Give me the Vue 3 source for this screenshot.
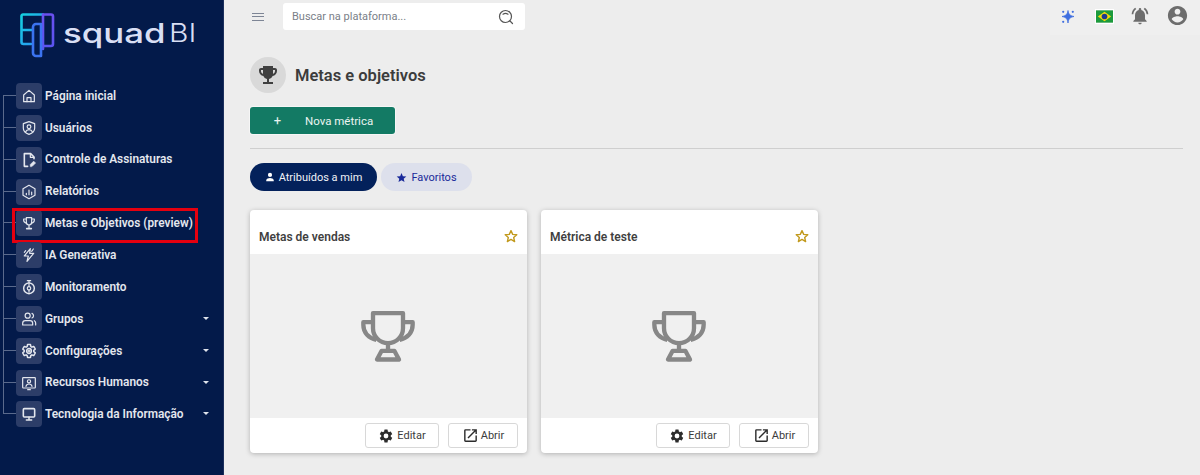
<script setup>
const menu = [
  { label: 'Página inicial', icon: 'home' },
  { label: 'Usuários', icon: 'shield' },
  { label: 'Controle de Assinaturas', icon: 'doc' },
  { label: 'Relatórios', icon: 'hex' },
  { label: 'Metas e Objetivos (preview)', icon: 'trophy', marked: true },
  { label: 'IA Generativa', icon: 'bolt' },
  { label: 'Monitoramento', icon: 'watch' },
  { label: 'Grupos', icon: 'users', caret: true },
  { label: 'Configurações', icon: 'gear', caret: true },
  { label: 'Recursos Humanos', icon: 'badge', caret: true },
  { label: 'Tecnologia da Informação', icon: 'monitor', caret: true }
]

const cards = ['Metas de vendas', 'Métrica de teste']

const gearPath = 'M19.14 12.94c.04-.3.06-.61.06-.94 0-.32-.02-.64-.07-.94l2.03-1.58a.49.49 0 0 0 .12-.61l-1.92-3.32a.49.49 0 0 0-.59-.22l-2.39.96c-.5-.38-1.03-.7-1.62-.94l-.36-2.54a.48.48 0 0 0-.48-.41h-3.84a.48.48 0 0 0-.47.41l-.36 2.54c-.59.24-1.13.57-1.62.94l-2.39-.96a.48.48 0 0 0-.59.22L2.74 8.87a.48.48 0 0 0 .12.61l2.03 1.58c-.05.3-.09.63-.09.94s.02.64.07.94l-2.03 1.58a.49.49 0 0 0-.12.61l1.92 3.32c.12.22.37.29.59.22l2.39-.96c.5.38 1.03.7 1.62.94l.36 2.54c.05.24.24.41.48.41h3.84c.24 0 .44-.17.47-.41l.36-2.54c.59-.24 1.13-.56 1.62-.94l2.39.96c.22.08.47 0 .59-.22l1.92-3.32a.48.48 0 0 0-.12-.61l-2.01-1.58zM12 15.6a3.6 3.6 0 1 1 0-7.2 3.6 3.6 0 0 1 0 7.2z'
const trophyPath = 'M19 5h-2V3H7v2H5c-1.1 0-2 .9-2 2v1c0 2.55 1.92 4.63 4.39 4.94.63 1.5 1.98 2.63 3.61 2.96V19H7v2h10v-2h-4v-3.1c1.63-.33 2.98-1.46 3.61-2.96C19.08 12.63 21 10.55 21 8V7c0-1.1-.9-2-2-2zM5 8V7h2v3.82C5.84 10.4 5 9.3 5 8zm14 0c0 1.3-.84 2.4-2 2.82V7h2v1z'
</script>

<template>
  <div class="app">
    <aside class="sidebar">
      <div class="logo">
        <svg class="logo-mark" width="35" height="45" viewBox="0 0 35 45" fill="none" stroke-width="2.600" stroke-linejoin="round" stroke-linecap="round">
          <defs>
            <linearGradient id="lg1" x1="0" y1="0" x2="1" y2="1">
              <stop offset="0" stop-color="#14d0e0" />
              <stop offset="1" stop-color="#2f8cf5" />
            </linearGradient>
            <linearGradient id="lg2" x1="0" y1="0" x2="0" y2="1">
              <stop offset="0" stop-color="#6a50f0" />
              <stop offset="1" stop-color="#5a55f0" />
            </linearGradient>
          </defs>
          <path d="M23 1.500H3a1.500 1.500 0 0 0-1.500 1.500V29a2 2 0 0 0 2 2H11M1.500 17H12" stroke="url(#lg1)" />
          <path d="M23 1.500H31a2 2 0 0 1 2 2V31a2 2 0 0 1-2 2H24M23 1.500V36" stroke="url(#lg2)" />
          <path d="M21 11H16a3 3 0 0 0-3 3V40a3 3 0 0 0 3 3H21V11" stroke="#3b73f0" />
        </svg>
        <span class="logo-squad">squad</span>
        <span class="logo-bi">BI</span>
      </div>

      <nav class="menu">
        <a v-for="item in menu" :key="item.label" class="menu-item" :class="{ marked: item.marked }">
          <span class="menu-icon">
            <svg width="16" height="16" viewBox="0 0 24 24" fill="none" stroke="#e4e7ee" stroke-width="1.800" stroke-linecap="round" stroke-linejoin="round">
              <template v-if="item.icon === 'home'">
                <path d="M4 10.500 12 3.500l8 7V20.500H4z" />
                <path d="M9 20.500v-6h6v6" />
              </template>
              <template v-else-if="item.icon === 'shield'">
                <path d="M12 2.500 20.500 5.500v7c0 4.500-3.500 7.500-8.500 9-5-1.500-8.500-4.500-8.500-9v-7z" />
                <circle cx="12" cy="10" r="2.800" />
                <path d="M7 17.500c1-2.500 3-3.200 5-3.200s4 .7 5 3.200" />
              </template>
              <template v-else-if="item.icon === 'doc'">
                <path d="M19.500 10V7.500L14.500 2.500H5v19h5" stroke-width="2.400" />
                <path d="M14 2.500V8h5.500" />
                <path d="M14 21.500v-2.800l5-5 2.800 2.800-5 5z" fill="#e4e7ee" stroke-width="1" />
              </template>
              <template v-else-if="item.icon === 'hex'">
                <path d="M12 2 21 7v10l-9 5-9-5V7z" />
                <path d="M8 16v-2M12 16V9M16 16v-4" />
              </template>
              <template v-else-if="item.icon === 'trophy'">
                <path d="M8 4h8v7a4 4 0 0 1-8 0z" />
                <path d="M8 6H4v2c0 2.500 1.800 4 4.500 4.500M16 6h4v2c0 2.500-1.800 4-4.500 4.500M12 15v4" />
                <path d="M8.500 20.500h7" stroke-width="2.400" />
              </template>
              <template v-else-if="item.icon === 'bolt'">
                <path d="M14 2.500 5 13.500h6l-2 8 10-12h-6z" />
                <path d="M18.500 3 16 6.500M5 8l2-2.500" />
              </template>
              <template v-else-if="item.icon === 'watch'">
                <circle cx="12" cy="14" r="8" stroke-width="2.200" />
                <circle cx="12" cy="14" r="2.600" />
                <path d="M9.500 2.500h5M12 2.500V6M12 8v3M12 17v3" />
              </template>
              <template v-else-if="item.icon === 'users'">
                <circle cx="10" cy="7" r="3.800" />
                <path d="M2.500 21v-2.500c0-2.500 2-4 4-4h7c2 0 4 1.500 4 4V21z" />
                <path d="M16.500 3.500a3.800 3.800 0 0 1 0 7M20 14.500c1.300.7 2 2 2 3.500v3" />
              </template>
              <template v-else-if="item.icon === 'gear'">
                <path :d="gearPath" stroke-width="2.200" />
                <circle cx="12" cy="12" r="1.500" />
              </template>
              <template v-else-if="item.icon === 'badge'">
                <rect x="2.500" y="4" width="19" height="15.500" rx="1" />
                <circle cx="12" cy="9.500" r="2.400" />
                <path d="M7.500 17c.5-2.500 2.500-3.500 4.500-3.500s4 1 4.500 3.500M10 22h4" />
              </template>
              <template v-else>
                <rect x="3.500" y="4" width="17" height="12.500" rx="1.500" stroke-width="2.400" />
                <path d="M8 21h8M12 17v4" stroke-width="2.200" />
              </template>
            </svg>
          </span>
          <span class="menu-label">{{ item.label }}</span>
          <span v-if="item.caret" class="caret"></span>
        </a>
      </nav>
    </aside>

    <div class="content">
      <header class="topbar">
        <button class="burger"><i></i><i></i><i></i></button>
        <div class="search">
          <span>Buscar na plataforma...</span>
          <svg width="16" height="16" viewBox="0 0 16 16" fill="none" stroke="#555" stroke-width="1.200" stroke-linecap="round">
            <circle cx="7.500" cy="7.500" r="6" />
            <path d="M5 5.200c1.400-1 3.600-1 5 0M12 12l2.500 2.500" />
          </svg>
        </div>
        <div class="top-actions">
          <svg class="spark" width="16" height="16" viewBox="0 0 16 16" fill="#3f6fe0">
            <path d="M8 1.500C8.600 5.200 9.800 6.600 14 7.500 9.800 8.400 8.600 9.800 8 14 7.400 9.800 6.200 8.400 2 7.500 6.200 6.600 7.400 5.200 8 1.500z" stroke="#3f6fe0" stroke-width=".8" />
            <circle cx="3.200" cy="2.800" r="1.100" />
            <circle cx="12.800" cy="2.800" r="1.100" />
            <circle cx="3.200" cy="12.800" r="1.100" />
          </svg>
          <svg class="flag" width="17" height="13" viewBox="0 0 18 13">
            <rect width="18" height="13" fill="#1c9a3c" />
            <path d="M9 1.500 16 6.500 9 11.500 2 6.500z" fill="#f5d90a" />
            <circle cx="9" cy="6.500" r="3" fill="#1d3a8f" />
          </svg>
          <svg class="bell" width="20" height="20" viewBox="0 0 24 24" fill="#6d6d6d">
            <path d="M12 22c1.100 0 2-.9 2-2h-4c0 1.100.9 2 2 2zm6-6v-5c0-3.100-1.630-5.600-4.500-6.300V4a1.500 1.500 0 0 0-3 0v.7C7.640 5.400 6 7.900 6 11v5l-2 2v1h16v-1zM7.580 3.600 6.150 2.170C3.750 4 2.170 6.820 2 10h2c.15-2.650 1.510-4.970 3.580-6.400zM20 10h2c-.15-3.180-1.730-6-4.150-7.830L16.430 3.600A8.030 8.030 0 0 1 20 10z" />
          </svg>
          <svg class="avatar" width="23" height="23" viewBox="0 0 24 24" fill="#6d6d6d">
            <path d="M12 2C6.480 2 2 6.480 2 12s4.480 10 10 10 10-4.480 10-10S17.520 2 12 2zm0 3c1.660 0 3 1.340 3 3s-1.340 3-3 3-3-1.340-3-3 1.340-3 3-3zm0 14.200a7.200 7.200 0 0 1-6-3.220c.03-1.990 4-3.080 6-3.080s5.970 1.090 6 3.080a7.200 7.200 0 0 1-6 3.220z" />
          </svg>
        </div>
      </header>

      <main class="page">
        <div class="title-row">
          <span class="title-icon">
            <svg width="24" height="24" viewBox="0 0 24 24" fill="#3f3f3f">
              <path :d="trophyPath" />
              <path d="M9 5h6v6c0 1.650-1.350 3-3 3s-3-1.350-3-3z" />
            </svg>
          </span>
          <h1>Metas e objetivos</h1>
        </div>

        <button class="new-btn"><span class="plus">+</span><span>Nova métrica</span></button>
        <hr />

        <div class="tabs">
          <button class="tab active">
            <svg width="10" height="10" viewBox="0 0 24 24" fill="#fff"><path d="M12 12a5 5 0 1 0 0-10 5 5 0 0 0 0 10zm0 2.500c-3.300 0-9 1.700-9 5V22h18v-2.500c0-3.300-5.700-5-9-5z" /></svg>
            Atribuídos a mim
          </button>
          <button class="tab">
            <svg width="11" height="11" viewBox="0 0 24 24" fill="#1a2a9a"><path d="M12 2l3 7 7.500.6-5.700 4.900 1.800 7.300L12 17.900l-6.600 3.900 1.800-7.300L1.500 9.600 9 9z" /></svg>
            Favoritos
          </button>
        </div>

        <div class="cards">
          <article v-for="card in cards" :key="card" class="card">
            <div class="card-head">
              <span>{{ card }}</span>
              <svg width="14" height="14" viewBox="0 0 24 24" fill="none" stroke="#c29a1e" stroke-width="2.400" stroke-linejoin="round"><path d="M12 2.800l2.900 6.400 7 .7-5.300 4.700 1.600 6.900-6.200-3.600-6.200 3.600 1.600-6.900-5.300-4.700 7-.7z" /></svg>
            </div>
            <div class="card-body">
              <svg width="60" height="57" viewBox="60 50 180 170" fill="none" stroke="#878787" stroke-width="13" stroke-linejoin="round">
                <path d="M102 65H192V110a45 45 0 0 1-90 0Z" />
                <path d="M102 92H73V100C73 125 90 140 112 145M192 92H221V100C221 125 204 140 182 145" />
                <path d="M147 155V178" />
                <path d="M128 178H166L180 204H114Z" />
              </svg>
            </div>
            <div class="card-foot">
              <button class="foot-btn edit">
                <svg width="16" height="16" viewBox="0 0 24 24" fill="#2c2c2c"><path :d="gearPath" /></svg>
                Editar
              </button>
              <button class="foot-btn open">
                <svg width="17" height="17" viewBox="0 0 24 24" fill="#2c2c2c"><path d="M19 19H5V5h7V3H5a2 2 0 0 0-2 2v14a2 2 0 0 0 2 2h14c1.100 0 2-.9 2-2v-7h-2v7zM14 3v2h3.590l-9.830 9.830 1.410 1.410L19 6.410V10h2V3h-7z" /></svg>
                Abrir
              </button>
            </div>
          </article>
        </div>
      </main>
    </div>
  </div>
</template>

<style scoped>
.app {
  display: flex;
  height: 475px;
  overflow: hidden;
  background: #ededed;
  font-family: Roboto, "Liberation Sans", sans-serif;
}

.sidebar {
  width: 224px;
  flex: none;
  box-sizing: border-box;
  background: #031a4a;
  border-right: 1px solid #1c2f5c;
}

.logo {
  display: flex;
  align-items: flex-start;
  height: 83px;
  padding: 13px 0 0 20px;
  box-sizing: border-box;
  color: #d9dff4;
}
.logo-mark { flex: none; }
.logo-squad {
  font-family: Inter, sans-serif;
  font-weight: 500;
  font-size: 27px;
  line-height: 30px;
  margin: 6px 0 0 8px;
  width: 99px;
  transform: scaleX(1.29);
  transform-origin: left;
}
.logo-bi {
  font-family: Inter, sans-serif;
  font-weight: 300;
  font-size: 26px;
  line-height: 30px;
  margin: 5px 0 0 7px;
  transform: scaleX(1.15);
  transform-origin: left;
}

.menu {
  display: flex;
  flex-direction: column;
  gap: 5.85px;
  position: relative;
  padding-left: 16px;
}
.menu::before {
  content: "";
  position: absolute;
  left: 3px;
  top: 12px;
  bottom: 13px;
  width: 1px;
  background: #5a6a8c;
}
.menu-item {
  display: flex;
  align-items: center;
  height: 26px;
  position: relative;
  color: #e4e7ee;
}
.menu-item::before {
  content: "";
  position: absolute;
  left: -13px;
  top: 12px;
  width: 13px;
  height: 1px;
  background: #5a6a8c;
}
.menu-item.marked::after {
  content: "";
  position: absolute;
  left: -4px;
  top: -2px;
  width: 186px;
  height: 35px;
  box-sizing: border-box;
  border: 3px solid #e5000f;
}
.menu-icon {
  width: 26px;
  height: 26px;
  flex: none;
  display: flex;
  align-items: center;
  justify-content: center;
  background: #2c3d68;
  border-radius: 4px;
}
.menu-label {
  margin: -0.5px 0 0 3px;
  font-weight: 600;
  font-size: 11.850px;
  white-space: nowrap;
}
.caret {
  position: absolute;
  left: 187px;
  top: 11px;
  border-left: 3px solid transparent;
  border-right: 3px solid transparent;
  border-top: 3px solid #dfe3ec;
}

.content { flex: 1; min-width: 0; }

.topbar {
  display: flex;
  align-items: center;
  height: 33px;
}
.burger {
  display: flex;
  flex-direction: column;
  gap: 2.500px;
  width: 12px;
  margin-left: 28px;
  padding: 0;
  border: 0;
  background: none;
}
.burger i { display: block; height: 1px; background: #7d8595; }
.search {
  display: flex;
  align-items: center;
  justify-content: space-between;
  width: 242px;
  height: 27px;
  margin-left: 19px;
  padding: 0 11px 0 9px;
  box-sizing: border-box;
  background: #fff;
  border-radius: 3px;
  font-size: 11px;
  color: #7a8088;
}
.top-actions {
  display: flex;
  align-items: center;
  align-self: flex-start;
  width: 150px;
  height: 35px;
  margin-left: auto;
  padding-right: 11px;
  box-sizing: border-box;
  justify-content: flex-end;
  background: #efefef;
}
.spark { margin: -1px 20px 0 0; }
.flag { outline: 1px solid #fff; margin: -2px 17px 0 0; }
.bell { margin: -3px 16px 0 0; }
.avatar { margin-top: -4px; }

.page { padding: 24px 17px 0 26px; }

.title-row {
  display: flex;
  align-items: center;
  gap: 9px;
}
.title-icon {
  width: 36px;
  height: 36px;
  display: flex;
  align-items: center;
  justify-content: center;
  background: #d9d9d9;
  border-radius: 50%;
}
h1 {
  margin: 1px 0 0;
  font-size: 16.500px;
  font-weight: 600;
  color: #3c3c3c;
}

.new-btn {
  display: flex;
  align-items: center;
  width: 145px;
  height: 27px;
  margin-top: 14px;
  padding: 0;
  background: #137a64;
  border: 0;
  border-radius: 3px;
  color: #eaf4f1;
  font-family: inherit;
  font-size: 11.500px;
  box-shadow: 0 0 0 1px #f6f6f6;
}
.plus { width: 55px; font-size: 13px; text-align: center; }

hr {
  margin: 14px 0 14px;
  border: 0;
  border-top: 1px solid #cfcfcf;
}

.tabs { display: flex; gap: 4px; }
.tab {
  display: flex;
  align-items: center;
  justify-content: center;
  gap: 4px;
  height: 28px;
  width: 91px;
  padding: 0;
  background: #dde0ec;
  border: 0;
  border-radius: 14px;
  color: #1a2a9a;
  font-family: inherit;
  font-size: 11px;
}
.tab.active {
  width: 127px;
  background: #03215b;
  color: #f0f2f7;
}

.cards {
  display: flex;
  gap: 14px;
  margin-top: 19px;
}
.card {
  width: 277px;
  height: 243px;
  display: flex;
  flex-direction: column;
  background: #fff;
  border-radius: 4px;
  box-shadow: 0 1px 5px rgba(0, 0, 0, 0.25);
  overflow: hidden;
}
.card-head {
  display: flex;
  align-items: center;
  justify-content: space-between;
  height: 44px;
  flex: none;
  padding: 9px 9px 0 9px;
  box-sizing: border-box;
  font-size: 12px;
  font-weight: 600;
  color: #3f3f3f;
}
.card-head svg { margin-top: -2px; }
.card-body {
  flex: 1;
  display: flex;
  align-items: center;
  justify-content: center;
  background: #f0f0f0;
}
.card-foot {
  display: flex;
  align-items: center;
  justify-content: flex-end;
  gap: 9px;
  height: 35px;
  flex: none;
  padding-right: 9px;
}
.foot-btn {
  display: flex;
  align-items: center;
  justify-content: center;
  gap: 3px;
  height: 25px;
  padding: 0;
  background: #fff;
  border: 1px solid #d8d8d8;
  border-radius: 3px;
  color: #3c3c3c;
  font-family: inherit;
  font-size: 11px;
}
.foot-btn.edit { width: 74px; }
.foot-btn.open { width: 70px; gap: 2px; }
</style>
<style>
html, body { background: #ededed; overflow: hidden; }
</style>
